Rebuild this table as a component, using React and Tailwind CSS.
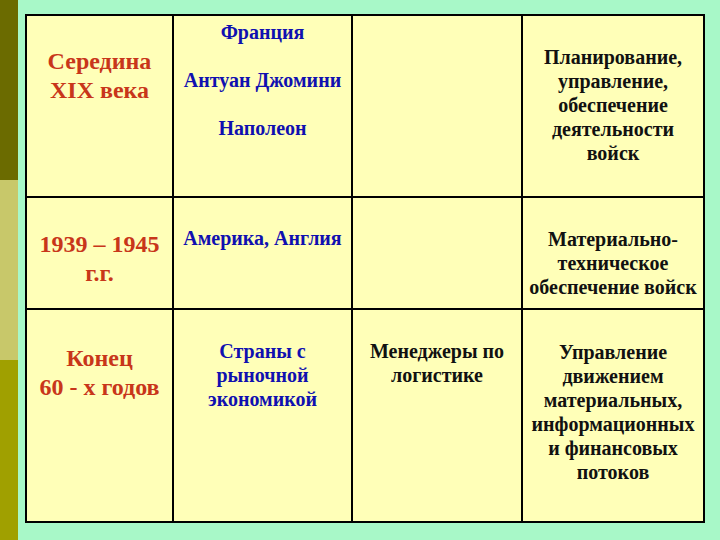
import React from 'react';

const Cell = ({ pt, color, size = 'small', lines }) => (
    <div className="bg-[#ffffb8] flex flex-col items-center" style={{ paddingTop: pt }}>
        {lines.map((l, i) => (
            <div
                key={i}
                className={
                    size === 'big'
                        ? `text-[24px] leading-[29px] font-bold text-center whitespace-nowrap ${color}`
                        : `text-[20px] leading-[24px] font-bold text-center whitespace-nowrap ${color}`
                }
            >
                {l || '\u00a0'}
            </div>
        ))}
    </div>
);

const App = () => {
    const red = 'text-[#c8361a]';
    const blue = 'text-[#1010b0]';
    const black = 'text-[#111111]';

    return (
        <div className="w-[720px] h-[540px] flex bg-[#a8f8c8] overflow-hidden font-['Liberation_Serif','Times_New_Roman',serif]">
            {/* left strip */}
            <div className="w-[18px] flex flex-col">
                <div className="h-[180px] bg-[#6b6b00]" />
                <div className="h-[180px] bg-[#c8c86a]" />
                <div className="h-[180px] bg-[#a0a000]" />
            </div>

            <div className="pl-[7px] pt-[14px]">
                <div className="grid grid-cols-[145px_177px_168px_180px] grid-rows-[180px_110px_211px] gap-[2px] p-[2px] bg-black">
                    {/* row 1 */}
                    <Cell pt={31} color={red} size="big" lines={['Середина', 'XIX века']} />
                    <Cell pt={4} color={blue} lines={['Франция', '', 'Антуан Джомини', '', 'Наполеон']} />
                    <div className="bg-[#ffffb8]" />
                    <Cell pt={29} color={black} lines={['Планирование,', 'управление,', 'обеспечение', 'деятельности', 'войск']} />

                    {/* row 2 */}
                    <Cell pt={32} color={red} size="big" lines={['1939 – 1945', 'г.г.']} />
                    <Cell pt={28} color={blue} lines={['Америка, Англия']} />
                    <div className="bg-[#ffffb8]" />
                    <Cell pt={29} color={black} lines={['Материально-', 'техническое', 'обеспечение войск']} />

                    {/* row 3 */}
                    <Cell pt={34} color={red} size="big" lines={['Конец', '60 - х годов']} />
                    <Cell pt={29} color={blue} lines={['Страны с', 'рыночной', 'экономикой']} />
                    <Cell pt={29} color={black} lines={['Менеджеры по', 'логистике']} />
                    <Cell pt={30} color={black} lines={['Управление', 'движением', 'материальных,', 'информационных', 'и финансовых', 'потоков']} />
                </div>
            </div>
        </div>
    );
};

export default App;
